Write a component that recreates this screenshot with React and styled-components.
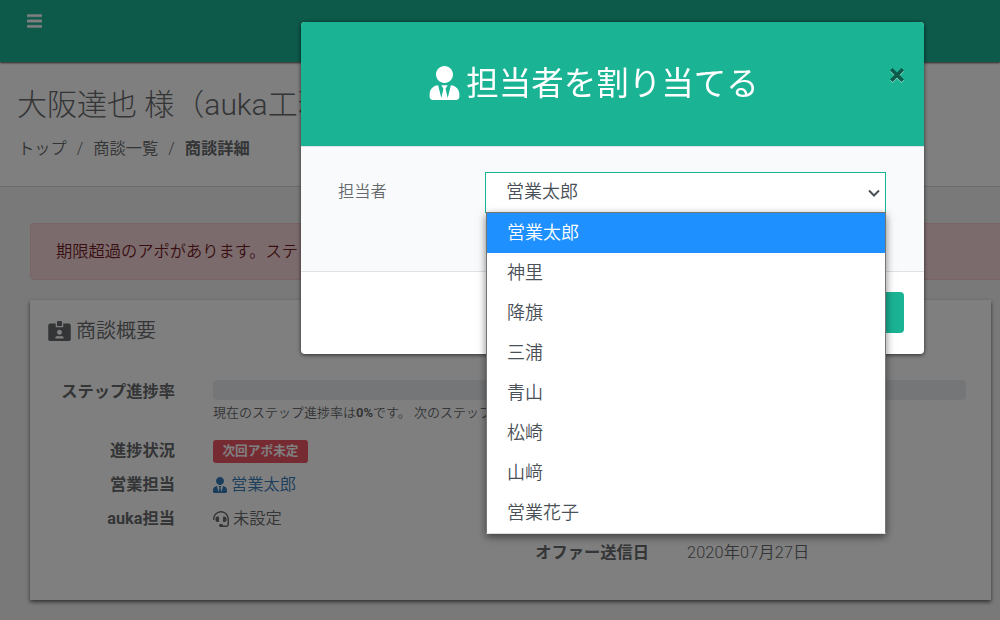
import styled, { createGlobalStyle } from 'styled-components';
import { FaBars, FaHeadset, FaIdCardAlt, FaUserTie } from 'react-icons/fa';

const GlobalStyle = createGlobalStyle`
	* {
		box-sizing: border-box;
	}

	body {
		margin: 0;
		overflow: hidden;
		background: #f3f3f4;
		color: #676a6c;
		font-family: Roboto, "Noto Sans CJK JP", sans-serif;
		font-size: 16.25px;
		font-weight: 350;
	}
`;

const Page = styled.div`
	height: 620px;
	overflow: hidden;
`;

const Navbar = styled.header`
	position: relative;
	height: 62px;
	padding: 12px 27px;
	background: #1ab394;
	color: #ffffff;
	box-shadow: 0 1px 2px rgba(0, 0, 0, 0.7);

	svg {
		display: block;
		width: 15px;
		height: 18px;
		stroke: #ffffff;
		stroke-width: 12px;
	}
`;

const PageHeading = styled.section`
	height: 125px;
	padding: 20px 17px 0;
	background: #ffffff;
	border-bottom: 1px solid #d6d6d6;

	h2 {
		margin: 0;
		font-size: 30px;
		font-weight: 300;
		line-height: 46px;
		white-space: nowrap;
	}
`;

const Breadcrumb = styled.ol`
	display: flex;
	margin: 8px 0 0 1px;
	padding: 0;
	list-style: none;
	line-height: 26px;

	li + li::before {
		content: '/';
		padding: 0 10px 0 11px;
		font-weight: 350;
	}

	li + li {
		margin-left: -1px;
	}

	li:last-child {
		font-weight: 700;
	}
`;

const Content = styled.main`
	padding: 36px 0 0 30px;
`;

const Alert = styled.div`
	width: 1000px;
	height: 57px;
	padding: 0 25px;
	border: 1px solid #f5c6cb;
	border-radius: 4px;
	background: #f8d7da;
	color: #721c24;
	font-size: 16.25px;
	line-height: 55px;
	white-space: nowrap;
`;

const Card = styled.section`
	width: 961px;
	height: 300px;
	margin-top: 20px;
	padding: 16px 25px 0 18px;
	background: #ffffff;
	box-shadow: 0 2px 4px rgba(0, 0, 0, 0.6);
`;

const CardTitle = styled.h5`
	display: flex;
	align-items: center;
	gap: 5px;
	height: 30px;
	margin: 0 0 29px;
	font-size: 20px;
	font-weight: 350;
	line-height: 26px;

	span {
		margin-top: -1px;
	}

	svg {
		width: 23px;
		height: 20px;
	}
`;

const Progress = styled.div`
	display: grid;
	grid-template-columns: 127px 1fr;
	column-gap: 38px;
	height: 59px;
	padding-top: 5px;
`;

const Label = styled.div`
	grid-column: 1;
	font-weight: 700;
	line-height: 23px;
	text-align: right;
	white-space: nowrap;
`;

const Bar = styled.div`
	height: 20px;
	border-radius: 4px;
	background: #e9ecef;
`;

const Note = styled.div`
	font-size: 13px;
	line-height: 25px;
	white-space: nowrap;
`;

const Details = styled.div`
	display: grid;
	grid-template-columns: 127px 247px 151px 1fr;
	grid-template-rows: repeat(4, 34px);
	column-gap: 38px;
	align-items: center;
	line-height: 24px;

	${Label} {
		line-height: 20px;
	}
`;

const OfferLabel = styled(Label)`
	grid-area: 4 / 3;
`;

const OfferValue = styled.div`
	grid-area: 4 / 4;
	letter-spacing: 0.15px;
`;

const Value = styled.div`
	display: flex;
	align-items: center;
	gap: 4px;
	grid-column: 2;
	color: ${({ $link }) => ($link ? '#337ab7' : 'inherit')};

	svg {
		width: ${({ $link }) => ($link ? 14 : 16)}px;
		height: 16px;
		margin-top: -1px;
	}
`;

const Badge = styled.span`
	width: 95px;
	height: 23px;
	border-radius: 3px;
	background: #ed5565;
	color: #ffffff;
	font-size: 12.7px;
	font-weight: 700;
	line-height: 22px;
	text-align: center;
`;

const Backdrop = styled.div`
	position: fixed;
	inset: 0;
	display: flex;
	justify-content: center;
	align-items: flex-start;
	padding: 22px 0 0 225px;
	background: rgba(0, 0, 0, 0.5);
`;

const Modal = styled.div`
	width: 623px;
	height: 332px;
	border-radius: 4px;
	background: #ffffff;
	box-shadow: 0 1px 4px rgba(0, 0, 0, 0.65);
`;

const ModalHeader = styled.div`
	position: relative;
	display: flex;
	justify-content: center;
	align-items: center;
	height: 125px;
	padding: 0 37px 1px 0;
	border-bottom: 1px solid #dee2e6;
	border-radius: 4px 4px 0 0;
	background: #1ab394;
	color: #ffffff;

	h4 {
		display: flex;
		align-items: center;
		gap: 6px;
		margin: 0;
		font-size: 32.5px;
		font-weight: 400;
		line-height: 48px;
	}

	h4 svg {
		width: 31px;
		height: 34px;
		margin-top: -1px;
	}
`;

const CloseButton = styled.button`
	position: absolute;
	top: 46px;
	right: 20px;
	width: 14px;
	height: 15px;
	padding: 0;
	border: none;
	background: none;

	svg {
		display: block;
		overflow: visible;
	}
`;

const ModalBody = styled.div`
	display: flex;
	height: 125px;
	padding: 25px 38px 0 37px;
	border-bottom: 1px solid #dee2e6;
	background: #f8fafb;
`;

const FieldLabel = styled.label`
	width: 147px;
	line-height: 39px;
`;

const SelectField = styled.div`
	position: relative;
	display: flex;
	justify-content: space-between;
	align-items: center;
	width: 401px;
	height: 41px;
	padding: 0 4px 0 20px;
	border: 1px solid #1ab394;
	background: #ffffff;
	color: #495057;
	font-size: 18px;
	line-height: 26px;
`;

const Selected = styled.span`
	margin-top: -2px;
`;

const Options = styled.ul`
	position: absolute;
	top: 39px;
	left: 0;
	width: 400px;
	margin: 0;
	padding: 0;
	border: 1px solid #767676;
	border-bottom-color: #dddddd;
	background: #ffffff;
	box-shadow: 0 3px 8px rgba(0, 0, 0, 0.5);
	list-style: none;
`;

const Option = styled.li`
	height: 40px;
	padding-left: 20px;
	background: ${({ $selected }) => ($selected ? '#1e90ff' : '#ffffff')};
	color: ${({ $selected }) => ($selected ? '#ffffff' : '#495057')};
	line-height: 40px;
`;

const ModalFooter = styled.div`
	display: flex;
	justify-content: flex-end;
	padding: 20px;
`;

const SaveButton = styled.button`
	width: 80px;
	height: 41px;
	border: none;
	border-radius: 4px;
	background: #1ab394;
`;

const members = ['営業太郎', '神里', '降旗', '三浦', '青山', '松崎', '山﨑', '営業花子'];

const AssignModal = () => (
	<Backdrop>
		<Modal>
			<ModalHeader>
				<h4>
					<FaUserTie />
					担当者を割り当てる
				</h4>
				<CloseButton aria-label="Close">
					<svg width="14" height="15" viewBox="0 0 14 15" fill="none">
						<path d="M1.3 2.3l11.4 11.4M12.7 2.3L1.3 13.7" stroke="#8ed9ca" strokeWidth="3.6" />
						<path d="M1.3 1.3l11.4 11.4M12.7 1.3L1.3 12.7" stroke="#0e5a4a" strokeWidth="3.6" />
					</svg>
				</CloseButton>
			</ModalHeader>
			<ModalBody>
				<FieldLabel>担当者</FieldLabel>
				<SelectField>
					<Selected>{members[0]}</Selected>
					<svg width="14" height="10" viewBox="0 0 14 10" fill="none">
						<path d="M2 2.5l5 5 5-5" stroke="#495057" strokeWidth="2" />
					</svg>
					<Options>
						{members.map((member, index) => (
							<Option key={member} $selected={index === 0}>
								{member}
							</Option>
						))}
					</Options>
				</SelectField>
			</ModalBody>
			<ModalFooter>
				<SaveButton />
			</ModalFooter>
		</Modal>
	</Backdrop>
);

const App = () => {
	return (
		<Page>
			<GlobalStyle />
			<Navbar>
				<FaBars />
			</Navbar>
			<PageHeading>
				<h2>大阪達也 様（auka工務</h2>
				<Breadcrumb>
					<li>トップ</li>
					<li>商談一覧</li>
					<li>商談詳細</li>
				</Breadcrumb>
			</PageHeading>
			<Content>
				<Alert>期限超過のアポがあります。ステ</Alert>
				<Card>
					<CardTitle>
						<FaIdCardAlt />
						<span>商談概要</span>
					</CardTitle>
					<Progress>
						<Label>ステップ進捗率</Label>
						<div>
							<Bar />
							<Note>
								現在のステップ進捗率は<b>0%</b>です。 次のステップ
							</Note>
						</div>
					</Progress>
					<Details>
						<Label>進捗状況</Label>
						<Value>
							<Badge>次回アポ未定</Badge>
						</Value>
						<Label>営業担当</Label>
						<Value $link>
							<FaUserTie />
							営業太郎
						</Value>
						<Label>auka担当</Label>
						<Value>
							<FaHeadset />
							未設定
						</Value>
						<OfferLabel>オファー送信日</OfferLabel>
						<OfferValue>2020年07月27日</OfferValue>
					</Details>
				</Card>
			</Content>
			<AssignModal />
		</Page>
	);
};

export default App;
